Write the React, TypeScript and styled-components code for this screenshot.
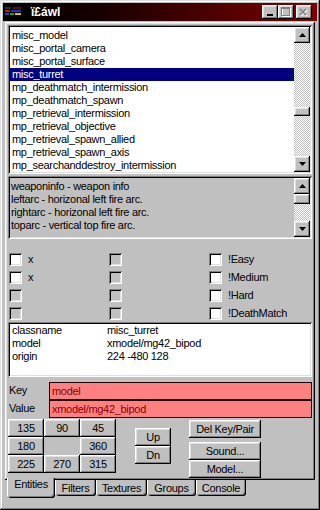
import React from 'react';
import styled, { createGlobalStyle, css } from 'styled-components';

const GlobalStyle = createGlobalStyle`
  html, body {
    margin: 0;
    padding: 0;
    background: #c0c0c0;
  }
  body {
    font-family: "Liberation Sans", Arial, sans-serif;
    font-size: 11px;
  }
  * {
    box-sizing: border-box;
  }
`;

const raised = css`
  box-shadow: inset -1px -1px #000, inset 1px 1px #fff, inset -2px -2px #808080, inset 2px 2px #dfdfdf;
`;

const sunken = css`
  box-shadow: inset 1px 1px #808080, inset -1px -1px #fff, inset 2px 2px #000, inset -2px -2px #dfdfdf;
`;

const Window = styled.div`
  width: 320px;
  height: 510px;
  background: #c0c0c0;
  padding: 3px;
  display: flex;
  flex-direction: column;
  color: #000;
  letter-spacing: -0.3px;
  box-shadow: inset -1px -1px #000, inset 1px 1px #dfdfdf, inset -2px -2px #808080, inset 2px 2px #fff;
`;

const TitleBar = styled.div`
  height: 18px;
  flex: none;
  display: flex;
  align-items: center;
  padding: 0 5px 0 2px;
  background: linear-gradient(to right, #000 0%, #160000 30%, #800000 100%);
  color: #fff;
  font-weight: bold;
  font-size: 12px;
  letter-spacing: 0;
`;

const TitleText = styled.span`
  margin-left: 9px;
  flex: 1;
`;

const TitleButton = styled.div<{ $gap?: number }>`
  width: 16px;
  height: 14px;
  margin-left: ${({ $gap }) => $gap ?? 0}px;
  background: #c0c0c0;
  display: flex;
  align-items: center;
  justify-content: center;
  ${raised};
`;

const Page = styled.div`
  margin: 1px 2px 0;
  height: 458px;
  flex: none;
  padding: 3px;
  display: flex;
  flex-direction: column;
  ${raised};
`;

const ListBox = styled.div`
  height: 149px;
  flex: none;
  background: #fff;
  padding: 2px;
  display: flex;
  ${sunken};
`;

const DescBox = styled(ListBox)`
  height: 63px;
  margin-top: 2px;
  background: #c0c0c0;
`;

const Lines = styled.div<{ $pad: number }>`
  flex: 1;
  overflow: hidden;
  padding-top: 2px;
  padding-left: ${({ $pad }) => $pad}px;
`;

const Row = styled.div<{ $selected?: boolean }>`
  height: 13px;
  line-height: 13px;
  white-space: nowrap;
  padding-left: 2px;
  margin-left: -1px;
  background: ${({ $selected }) => ($selected ? '#000080' : 'transparent')};
  color: ${({ $selected }) => ($selected ? '#fff' : '#000')};
`;

const ScrollBar = styled.div`
  width: 16px;
  flex: none;
  display: flex;
  flex-direction: column;
`;

const ArrowButton = styled.div`
  width: 16px;
  height: 16px;
  flex: none;
  background: #c0c0c0;
  display: flex;
  align-items: center;
  justify-content: center;
  ${raised};
`;

const Track = styled.div`
  flex: 1;
  background: repeating-conic-gradient(#c0c0c0 0 25%, #fff 0 50%) 0 0 / 2px 2px;
`;

const Thumb = styled.div<{ $top: number; $height: number }>`
  width: 16px;
  height: ${({ $height }) => $height}px;
  margin-top: ${({ $top }) => $top}px;
  background: #c0c0c0;
  ${raised};
`;

const CheckGrid = styled.div`
  margin-top: 11px;
  height: 72px;
  flex: none;
  display: grid;
  grid-template-columns: 100px 100px 1fr;
  grid-auto-rows: 18px;
`;

const CheckCell = styled.div`
  display: flex;
  align-items: center;
  padding-left: 1px;
  gap: 6px;
`;

const CheckBox = styled.div<{ $disabled?: boolean }>`
  width: 13px;
  height: 13px;
  flex: none;
  background: ${({ $disabled }) => ($disabled ? '#c0c0c0' : '#fff')};
  box-shadow: inset 1px 1px #808080, inset -1px -1px #fff, inset 2px 2px #000, inset -2px -2px #dfdfdf;
`;

const PropsBox = styled.div`
  height: 55px;
  flex: none;
  background: #fff;
  padding: 2px 2px 2px 4px;
  ${sunken};
`;

const PropRow = styled.div`
  display: flex;
  height: 13px;
  line-height: 13px;
  white-space: nowrap;
`;

const PropName = styled.span`
  width: 95px;
  flex: none;
`;

const FieldRow = styled.div`
  display: flex;
  height: 18px;
  flex: none;
`;

const FieldLabel = styled.div`
  width: 41px;
  flex: none;
  padding-left: 1px;
  line-height: 13px;
  padding-top: 2px;
`;

const FieldInput = styled.div<{ $first?: boolean }>`
  flex: 1;
  height: 18px;
  background: #ff8080;
  color: #8b0000;
  border: 1px solid #1a0000;
  line-height: 16px;
  padding-left: 2px;
  white-space: nowrap;
`;

const Fields = styled.div`
  margin-top: 5px;
  display: flex;
  flex-direction: column;
`;

const Bottom = styled.div`
  margin-top: 1px;
  height: 58px;
  flex: none;
  display: flex;
`;

const AngleGrid = styled.div`
  display: grid;
  grid-template-columns: repeat(3, 36px);
  grid-auto-rows: 18px;
  align-content: start;
`;

const Button = styled.div<{ $w: number; $h?: number }>`
  width: ${({ $w }) => $w}px;
  height: ${({ $h }) => $h ?? 18}px;
  flex: none;
  background: #c0c0c0;
  display: flex;
  align-items: center;
  justify-content: center;
  white-space: nowrap;
  font-size: 11px;
  ${raised};
`;

const ButtonColumn = styled.div<{ $left: number; $top: number; $gap: number }>`
  margin-left: ${({ $left }) => $left}px;
  padding-top: ${({ $top }) => $top}px;
  display: flex;
  flex-direction: column;
  gap: ${({ $gap }) => $gap}px;
`;

const Tabs = styled.div`
  display: flex;
  margin-top: -2px;
  padding-left: 4px;
  align-items: flex-start;
  position: relative;
`;

const Tab = styled.div<{ $w: number; $active?: boolean }>`
  width: ${({ $w }) => $w}px;
  height: ${({ $active }) => ($active ? 20 : 16)}px;
  margin-top: ${({ $active }) => ($active ? 0 : 2)}px;
  background: #c0c0c0;
  text-align: center;
  line-height: 13px;
  padding-top: ${({ $active }) => ($active ? 0 : 2)}px;
  border-radius: 0 0 3px 3px;
  box-shadow: inset 1px 0 #fff, inset -1px -1px #000, inset -2px -2px #808080;
`;

const Tri = ({ down }: { down?: boolean }) => (
  <svg width="7" height="4" viewBox="0 0 7 4">
    <polygon points={down ? '0,0 7,0 3.5,4' : '3.5,0 7,4 0,4'} fill="#000" />
  </svg>
);

const AppIcon = () => (
  <svg width="17" height="10" viewBox="0 0 17 10">
    <rect x="0" y="0" width="6" height="2" fill="#303030" />
    <rect x="8" y="0" width="8" height="2" fill="#5a1010" />
    <rect x="0" y="3" width="5" height="2" fill="#c01818" />
    <rect x="6" y="3" width="10" height="2" fill="#2030c0" />
    <rect x="0" y="6" width="4" height="2" fill="#2040d0" />
    <rect x="5" y="6" width="4" height="2" fill="#20a040" />
    <rect x="10" y="6" width="6" height="2" fill="#d0c020" />
  </svg>
);

const entities = [
  'misc_model',
  'misc_portal_camera',
  'misc_portal_surface',
  'misc_turret',
  'mp_deathmatch_intermission',
  'mp_deathmatch_spawn',
  'mp_retrieval_intermission',
  'mp_retrieval_objective',
  'mp_retrieval_spawn_allied',
  'mp_retrieval_spawn_axis',
  'mp_searchanddestroy_intermission',
];

const desc = [
  'weaponinfo - weapon info',
  'leftarc - horizonal left fire arc.',
  'rightarc - horizonal left fire arc.',
  'toparc - vertical top fire arc.',
];

const checks: { label?: string; disabled?: boolean }[] = [
  { label: 'x' },
  { disabled: true },
  { label: '!Easy' },
  { label: 'x' },
  { disabled: true },
  { label: '!Medium' },
  { disabled: true },
  { disabled: true },
  { label: '!Hard' },
  { disabled: true },
  { disabled: true },
  { label: '!DeathMatch' },
];

const props = [
  ['classname', 'misc_turret'],
  ['model', 'xmodel/mg42_bipod'],
  ['origin', '224 -480 128'],
];

const angles = ['135', '90', '45', '180', '', '360', '225', '270', '315'];

const tabs = [
  { name: 'Entities', w: 48, active: true },
  { name: 'Filters', w: 41 },
  { name: 'Textures', w: 51 },
  { name: 'Groups', w: 49 },
  { name: 'Console', w: 50 },
];

export default function App() {
  return (
    <>
      <GlobalStyle />
      <Window>
        <TitleBar>
          <AppIcon />
          <TitleText>ï£áwl</TitleText>
          <TitleButton>
            <svg width="8" height="8" viewBox="0 0 8 8">
              <rect x="1" y="6" width="6" height="2" fill="#000" />
            </svg>
          </TitleButton>
          <TitleButton>
            <svg width="10" height="10" viewBox="0 0 10 10">
              <rect x="1.5" y="1.5" width="8" height="8" fill="none" stroke="#fff" />
              <rect x="0.5" y="0.5" width="8" height="8" fill="none" stroke="#808080" />
              <rect x="0" y="0" width="9" height="2" fill="#808080" />
            </svg>
          </TitleButton>
          <TitleButton $gap={2}>
            <svg width="10" height="9" viewBox="0 0 10 9">
              <path d="M2 2l6 6M8 2l-6 6" stroke="#fff" strokeWidth="1.6" />
              <path d="M1 1l6 6M7 1l-6 6" stroke="#808080" strokeWidth="1.6" />
            </svg>
          </TitleButton>
        </TitleBar>

        <Page>
          <ListBox>
            <Lines $pad={1}>
              {entities.map((e) => (
                <Row key={e} $selected={e === 'misc_turret'}>
                  {e}
                </Row>
              ))}
            </Lines>
            <ScrollBar>
              <ArrowButton>
                <Tri />
              </ArrowButton>
              <Track>
                <Thumb $top={64} $height={9} />
              </Track>
              <ArrowButton>
                <Tri down />
              </ArrowButton>
            </ScrollBar>
          </ListBox>

          <DescBox>
            <Lines $pad={0}>
              {desc.map((d) => (
                <Row key={d}>{d}</Row>
              ))}
            </Lines>
            <ScrollBar>
              <ArrowButton>
                <Tri />
              </ArrowButton>
              <Track>
                <Thumb $top={0} $height={10} />
              </Track>
              <ArrowButton>
                <Tri down />
              </ArrowButton>
            </ScrollBar>
          </DescBox>

          <CheckGrid>
            {checks.map((c, i) => (
              <CheckCell key={i}>
                <CheckBox $disabled={c.disabled} />
                {c.label && <span>{c.label}</span>}
              </CheckCell>
            ))}
          </CheckGrid>

          <PropsBox>
            {props.map(([k, v]) => (
              <PropRow key={k}>
                <PropName>{k}</PropName>
                <span>{v}</span>
              </PropRow>
            ))}
          </PropsBox>

          <Fields>
            <FieldRow>
              <FieldLabel>Key</FieldLabel>
              <FieldInput>model</FieldInput>
            </FieldRow>
            <FieldRow>
              <FieldLabel>Value</FieldLabel>
              <FieldInput>xmodel/mg42_bipod</FieldInput>
            </FieldRow>
          </Fields>

          <Bottom>
            <AngleGrid>
              {angles.map((a, i) => (a ? <Button key={i} $w={36}>{a}</Button> : <span key={i} />))}
            </AngleGrid>
            <ButtonColumn $left={19} $top={9} $gap={0}>
              <Button $w={36}>Up</Button>
              <Button $w={36}>Dn</Button>
            </ButtonColumn>
            <ButtonColumn $left={18} $top={1} $gap={0}>
              <Button $w={72}>Del Key/Pair</Button>
              <Button $w={72} style={{ marginTop: 4 }}>
                Sound...
              </Button>
              <Button $w={72}>Model...</Button>
            </ButtonColumn>
          </Bottom>
        </Page>

        <Tabs>
          {tabs.map((t) => (
            <Tab key={t.name} $w={t.w} $active={t.active}>
              {t.name}
            </Tab>
          ))}
        </Tabs>
      </Window>
    </>
  );
}
